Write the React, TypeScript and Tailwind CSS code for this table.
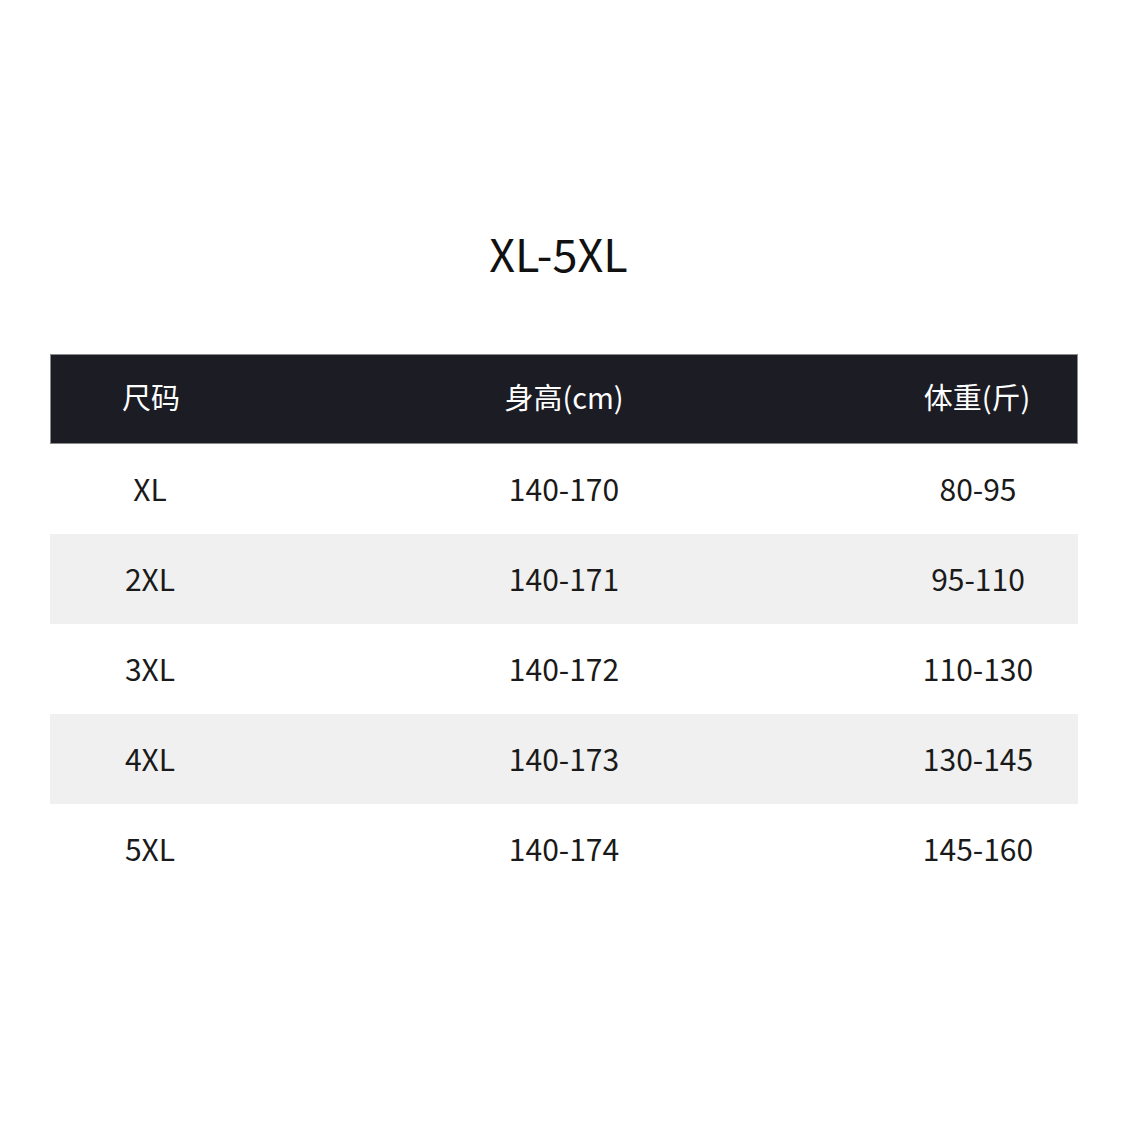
import React from "react";

const rows = [
  ["XL", "140-170", "80-95"],
  ["2XL", "140-171", "95-110"],
  ["3XL", "140-172", "110-130"],
  ["4XL", "140-173", "130-145"],
  ["5XL", "140-174", "145-160"],
];

const font = { fontFamily: '"Noto Sans CJK SC", "Noto Sans", sans-serif' };

export default function App() {
  return (
    <div className="w-[1125px] h-[1125px] bg-white" style={font}>
      <div className="pt-[223px] h-[354px]">
        <div className="text-center text-[45px] leading-[60px] text-[#111111] mr-[8px]">XL-5XL</div>
      </div>
      <div className="ml-[50px] w-[1028px]">
        <div className="grid grid-cols-[200px_1fr_200px] h-[90px] items-center bg-[#1b1c24] border border-[#8a8a8a] text-white text-[29px] leading-none pb-[6px]">
          <div className="text-center">尺码</div>
          <div className="text-center">身高(cm)</div>
          <div className="text-center">体重(斤)</div>
        </div>
        {rows.map((r, i) => (
          <div
            key={i}
            className={`grid grid-cols-[200px_1fr_200px] h-[90px] items-center text-[30px] leading-none text-[#1a1a1a] pb-[3px] ${i % 2 === 1 ? "bg-[#f0f0f0]" : "bg-white"}`}
          >
            <div className="text-center">{r[0]}</div>
            <div className="text-center">{r[1]}</div>
            <div className="text-center">{r[2]}</div>
          </div>
        ))}
      </div>
    </div>
  );
}
